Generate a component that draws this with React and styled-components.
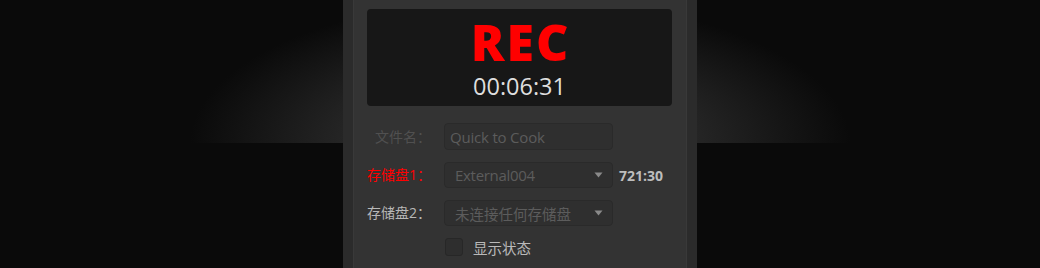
import React from "react";
import styled, { createGlobalStyle } from "styled-components";

const GlobalStyle = createGlobalStyle`
  html, body { margin: 0; padding: 0; background: #0a0a0a; }
  body { font-family: "Open Sans", "Noto Sans CJK SC", sans-serif; }
  * { box-sizing: border-box; }
`;

const Stage = styled.div`
  width: 1040px;
  height: 268px;
  overflow: hidden;
  display: flex;
  justify-content: center;
  background:
    radial-gradient(ellipse 330px 145px at 50% 100%, #444444 0%, #0a0a0a 100%) top / 100% 143px no-repeat,
    #0a0a0a;
`;

const Panel = styled.div`
  width: 354px;
  height: 268px;
  background: #2b2b2b;
  padding: 0 10px;
  display: flex;
`;

const PanelInner = styled.div`
  flex: 1;
  background: #333333;
  border-left: 1px solid #393939;
  border-right: 1px solid #393939;
  padding: 9px 14px 0 13px;
  display: flex;
  flex-direction: column;
`;

const Display = styled.div`
  height: 97px;
  background: #171717;
  border-radius: 4px;
  display: flex;
  flex-direction: column;
  align-items: center;
  padding-top: 12.5px;
  gap: 12px;
`;

const RecLabel = styled.div`
  font-family: "Open Sans", sans-serif;
  font-weight: 800;
  font-size: 50px;
  line-height: 40px;
  letter-spacing: 2px;
  margin-right: -2px;
  color: #ff0000;
`;

const TimeCode = styled.div`
  font-family: "Open Sans", sans-serif;
  font-size: 23.5px;
  line-height: 24px;
  color: #dedede;
`;

const Form = styled.div`
  margin-top: 17px;
  display: grid;
  grid-template-columns: 64px 169px auto;
  column-gap: 13px;
  row-gap: 12px;
  align-items: center;
`;

const Label = styled.div`
  font-size: 14px;
  line-height: 20px;
  text-align: right;
  white-space: nowrap;
  color: ${(p) => p.$color};
  font-family: "Open Sans", "Noto Sans CJK SC", sans-serif;
`;

const Field = styled.div`
  height: ${(p) => p.$h}px;
  background: #2f2f2f;
  border: 1px solid #2a2a2a;
  border-radius: 4px;
  display: flex;
  align-items: center;
  padding-left: ${(p) => p.$pad}px;
  padding-right: 9px;
  font-size: ${(p) => p.$fs}px;
  letter-spacing: ${(p) => p.$ls}px;
  color: #5c5c5c;
  font-family: "Open Sans", "Noto Sans CJK SC", sans-serif;
  white-space: nowrap;
`;

const FieldText = styled.span`
  flex: 1;
`;

const Caret = styled.svg`
  width: 9px;
  height: 6px;
  flex: none;
`;

const Extra = styled.div`
  margin-left: -7px;
  font-size: 14px;
  font-weight: 700;
  color: #bdbdbd;
  font-family: "Open Sans", sans-serif;
`;

const CheckRow = styled.label`
  grid-column: 2 / 4;
  display: flex;
  align-items: center;
  gap: 10px;
  height: 20px;
  margin-top: -1px;
  margin-left: 1px;
`;

const CheckBox = styled.span`
  width: 18px;
  height: 18px;
  border-radius: 3px;
  background: #2e2e2e;
  border: 1px solid #272727;
`;

const CheckText = styled.span`
  font-size: 14.5px;
  color: #bababa;
  font-family: "Noto Sans CJK SC", sans-serif;
`;

const Spacer = styled.div``;

function Arrow() {
  return (
    <Caret viewBox="0 0 9 6">
      <path d="M0.5 0.5 L8.5 0.5 L4.5 5.5 Z" fill="#8a8a8a" />
    </Caret>
  );
}

export default function App() {
  return (
    <>
      <GlobalStyle />
      <Stage>
        <Panel>
          <PanelInner>
            <Display>
              <RecLabel>REC</RecLabel>
              <TimeCode>00:06:31</TimeCode>
            </Display>
            <Form>
              <Label $color="#505050">文件名：</Label>
              <Field $h={27} $pad={5} $fs={15} $ls={-0.2}>
                <FieldText>Quick to Cook</FieldText>
              </Field>
              <Spacer />

              <Label $color="#ff0000">存储盘1：</Label>
              <Field $h={26} $pad={10} $fs={15} $ls={-0.3}>
                <FieldText>External004</FieldText>
                <Arrow />
              </Field>
              <Extra>721:30</Extra>

              <Label $color="#b8b8b8">存储盘2：</Label>
              <Field $h={26} $pad={10} $fs={14.5} $ls={0}>
                <FieldText>未连接任何存储盘</FieldText>
                <Arrow />
              </Field>
              <Spacer />

              <CheckRow>
                <CheckBox />
                <CheckText>显示状态</CheckText>
              </CheckRow>
            </Form>
          </PanelInner>
        </Panel>
      </Stage>
    </>
  );
}
